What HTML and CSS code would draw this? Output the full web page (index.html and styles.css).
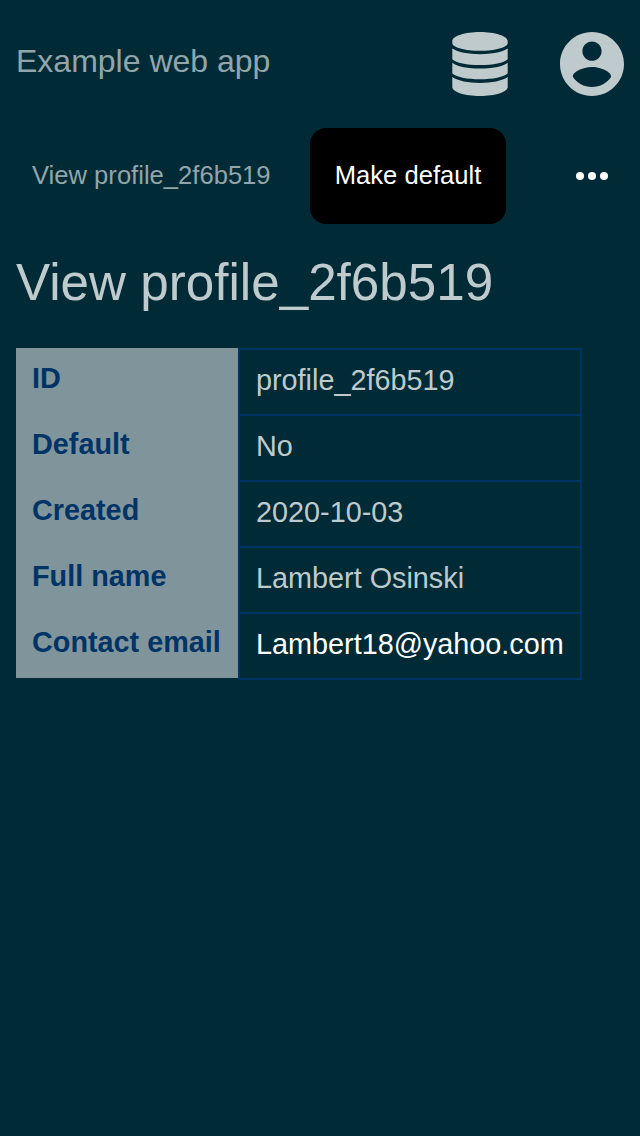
FILE: index.html
```html
<!DOCTYPE html>
<html lang="en">
<head>
<meta charset="utf-8">
<title>View profile_2f6b519</title>
<link rel="stylesheet" href="styles.css">
</head>
<body>
<header class="topbar">
  <span class="brand">Example web app</span>
  <nav class="topnav">
    <svg class="icon-db" viewBox="0 0 56 64"><path d="M28 0C13 0 .3 4 .3 9v2C.3 15.500 13 18.800 28 18.800S55.700 15.500 55.700 11V9C55.700 4 43 0 28 0zM.3 16.600C6 20.500 16 22.200 28 22.200s22-1.700 27.700-5.600v10.600C52 31 41 33 28 33S4 31 .3 27.200zM.3 30.700C6 34.800 16 36.600 28 36.600s22-1.800 27.700-5.900v10.600C52 45.200 41 47.300 28 47.300S4 45.200 .3 41.300zM.3 45C6 49 16 50.900 28 50.900S50 49 55.700 45v10c0 5-12.700 9-27.700 9S.3 60 .3 55z"/></svg>
    <svg class="icon-user" viewBox="2 2 20 20"><path d="M12 2C6.480 2 2 6.480 2 12s4.480 10 10 10 10-4.480 10-10S17.520 2 12 2zm0 3c1.660 0 3 1.340 3 3s-1.340 3-3 3-3-1.340-3-3 1.340-3 3-3zm0 14.200c-2.500 0-4.710-1.280-6-3.220.03-1.990 4-3.080 6-3.080 1.990 0 5.970 1.090 6 3.080-1.290 1.940-3.500 3.220-6 3.220z"/></svg>
  </nav>
</header>
<div class="actions">
  <span class="crumb">View profile_2f6b519</span>
  <button class="primary">Make default</button>
  <svg class="more" viewBox="0 0 32 8"><circle cx="4" cy="4" r="4"/><circle cx="16" cy="4" r="4"/><circle cx="28" cy="4" r="4"/></svg>
</div>
<main>
  <h1 class="title">View profile_2f6b519</h1>
  <dl class="details">
    <dt>ID</dt><dd>profile_2f6b519</dd>
    <dt>Default</dt><dd>No</dd>
    <dt>Created</dt><dd>2020-10-03</dd>
    <dt>Full name</dt><dd>Lambert Osinski</dd>
    <dt>Contact email</dt><dd><a class="mail">Lambert18@yahoo.com</a></dd>
  </dl>
</main>
</body>
</html>
```
FILE: styles.css
```css
* { box-sizing: border-box; }
body { margin: 0; min-height: 1136px; background: #002b36; color: #bfcacd; font-family: "Liberation Sans", Arial, sans-serif; }
.topbar { display: flex; justify-content: space-between; height: 128px; padding: 32px 16px; }
.brand { font-size: 32px; line-height: 58px; color: #93a5aa; }
.topnav { display: flex; gap: 52px; fill: #bfcacd; }
.icon-db { width: 56px; height: 64px; }
.icon-user { width: 64px; height: 64px; }
.actions { display: flex; align-items: center; height: 96px; padding: 0 32px; }
.crumb { width: 278px; padding-bottom: 2px; font-size: 25.6px; white-space: nowrap; color: #93a5aa; }
.primary { width: 196px; height: 96px; padding: 0 0 2px; border: 0; border-radius: 16px; background: #000; color: #fff; font: 25.6px "Liberation Sans", Arial, sans-serif; }
.more { width: 32px; height: 8px; margin-left: auto; fill: #fff; }
.title { margin: 24px 16px 0; font-size: 51.2px; font-weight: 400; line-height: 70px; }
.details { display: grid; grid-template-columns: 222px 344px; width: 566px; margin: 30px 16px 0; font-size: 28.8px; line-height: 32px; }
.details dt { height: 66px; padding: 14px 16px; background: #80959b; color: #036; font-weight: 700; white-space: nowrap; }
.details dd { height: 68px; margin: 0 0 -2px; padding: 14px 16px; border: 2px solid #036; }
.mail { color: #fff; }
```
